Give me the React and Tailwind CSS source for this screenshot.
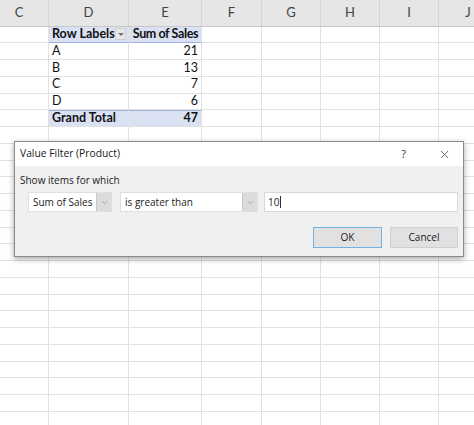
import { ChevronDown, X } from "lucide-react";

const COLS = [
  { key: "C", w: "w-[59px] -ml-[10px]" },
  { key: "D", w: "w-[80px]" },
  { key: "E", w: "w-[73px]" },
  { key: "F", w: "w-[60px]" },
  { key: "G", w: "w-[59px]" },
  { key: "H", w: "w-[59px]" },
  { key: "I", w: "w-[59px]" },
  { key: "J", w: "w-[59px]" },
];

const PIVOT = [
  ["A", 21],
  ["B", 13],
  ["C", 7],
  ["D", 6],
];

function Row({ d, e, tone }) {
  const blue = tone === "head" || tone === "total";
  return (
    <div className="flex h-[16.75px] shrink-0">
      {COLS.map((c) => {
        const pivot = c.key === "D" || c.key === "E";
        const extra = pivot && blue ? "bg-[#d9e1f2]" : "";
        const topBorder = tone === "total" && pivot;
        const underHead = tone === "head" && pivot;
        return (
          <div
            key={c.key}
            className={`${c.w} shrink-0 border-r border-b border-[#e1e1e1] ${extra} ${topBorder ? "border-t border-t-[#9bb4de]" : ""} ${underHead ? "border-b-[#9bb4de]" : ""} flex items-center whitespace-nowrap`}
          >
            {c.key === "D" && d}
            {c.key === "E" && <div className="flex-1 text-right pr-[3px]">{e}</div>}
          </div>
        );
      })}
    </div>
  );
}

function Combo({ label, w }) {
  return (
    <div className={`flex h-[20px] ${w} border border-[#e0e0e0] bg-white`}>
      <span className="flex flex-1 items-center whitespace-nowrap pl-[4px]">{label}</span>
      <span className="flex w-[15px] items-center justify-center border-l border-[#c8c8c8] bg-[#dcdcdc]">
        <ChevronDown className="h-[9px] w-[9px] text-[#777]" strokeWidth={1.5} />
      </span>
    </div>
  );
}

export default function App() {
  const blank = Array.from({ length: 18 });
  return (
    <div className="relative h-[425px] w-[474px] overflow-hidden bg-white font-['Lato','Liberation_Sans',sans-serif] text-[12.5px] text-[#111]">
      {/* column header */}
      <div className="flex h-[26.5px] border-b border-[#c8c8c8] bg-[#e6e6e6]">
        {COLS.map((c) => (
          <div
            key={c.key}
            className={`${c.w} shrink-0 border-r border-[#d4d4d4] flex items-end justify-center pb-[3px] text-[13px] text-[#444]`}
          >
            {c.key}
          </div>
        ))}
      </div>

      <div className="flex flex-col">
        <Row
          tone="head"
          d={
            <div className="flex w-full items-center justify-between pl-[3px] pr-[2px] font-bold">
              <span>Row Labels</span>
              <span className="flex h-[12px] w-[11px] items-center justify-center border border-[#d0d0d0] bg-[#e8e8e8]">
                <span className="block h-0 w-0 border-x-[3px] border-t-[3px] border-x-transparent border-t-[#777]" />
              </span>
            </div>
          }
          e={<span className="font-bold tracking-[-0.4px]">Sum of Sales</span>}
        />
        {PIVOT.map(([k, v]) => (
          <Row key={k} d={<span className="pl-[3px]">{k}</span>} e={v} />
        ))}
        <Row
          tone="total"
          d={<span className="pl-[3px] font-bold">Grand Total</span>}
          e={<span className="font-bold">47</span>}
        />
        {blank.map((_, i) => (
          <Row key={i} />
        ))}
      </div>

      {/* Value Filter dialog */}
      <div className="absolute left-[14px] top-[141px] flex h-[116px] w-[450px] flex-col border border-[#8a8a8a] bg-[#f0f0f0] font-['Open_Sans','Noto_Sans',sans-serif] text-[10px] text-[#1a1a1a] shadow-[0_2px_6px_rgba(0,0,0,0.35)]">
        <div className="flex h-[24px] items-center bg-white pl-[5px] pr-[12px]">
          <span className="flex-1 text-[10.3px]">Value Filter (Product)</span>
          <span className="mr-[32px] text-[11px] text-[#333]">?</span>
          <X className="h-[13px] w-[13px] text-[#333]" strokeWidth={1.3} />
        </div>
        <div className="flex flex-col px-[5px] pt-[7px]">
          <span className="leading-[14px]">Show items for which</span>
          <div className="mt-[5px] flex items-center pl-[8px]">
            <Combo label="Sum of Sales" w="w-[84px]" />
            <div className="ml-[8px]">
              <Combo label="is greater than" w="w-[138px]" />
            </div>
            <div className="ml-[6px] flex h-[20px] w-[194px] items-center border border-[#d8d8d8] bg-white pl-[3px]">
              <span>10</span>
              <span className="ml-[1px] h-[12px] w-px bg-[#333]" />
            </div>
          </div>
          <div className="mt-[15px] flex justify-end gap-[8px]">
            <button className="flex h-[21px] w-[69px] items-center justify-center border border-[#6fb1e3] bg-[#e1e1e1]">
              OK
            </button>
            <button className="flex h-[21px] w-[68px] items-center justify-center border border-[#d0d0d0] bg-[#e1e1e1]">
              Cancel
            </button>
          </div>
        </div>
      </div>
    </div>
  );
}
